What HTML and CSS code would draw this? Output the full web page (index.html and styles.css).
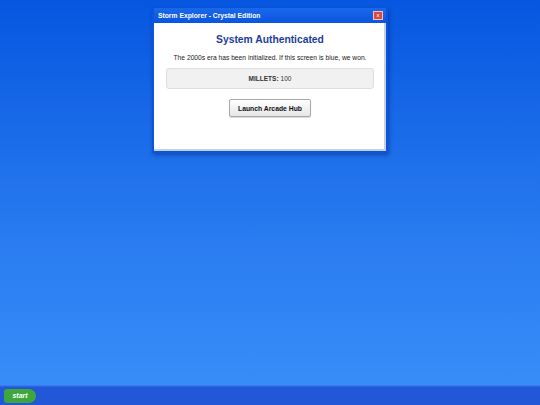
FILE: index.html
```html
<!DOCTYPE html>
<html>
<head>
<meta charset="utf-8">
<link rel="stylesheet" href="styles.css">
</head>
<body>
<div class="screen">
  <main class="desktop">
    <section class="window">
      <header class="titlebar">
        <span class="title">Storm Explorer - Crystal Edition</span>
        <span class="close">x</span>
      </header>
      <div class="content">
        <h1 class="heading">System Authenticated</h1>
        <p class="intro">The 2000s era has been initialized. If this screen is blue, we won.</p>
        <div class="stats"><b>MILLETS:</b> 100</div>
        <button class="launch">Launch Arcade Hub</button>
      </div>
    </section>
  </main>
  <footer class="taskbar">
    <span class="start">start</span>
  </footer>
</div>
</body>
</html>
```
FILE: styles.css
```css
html, body {
  margin: 0;
  padding: 0;
}
body {
  font-family: "Liberation Sans", Arial, sans-serif;
}
.screen {
  width: 540px;
  height: 405px;
  display: flex;
  flex-direction: column;
  background: linear-gradient(to bottom, #0756e0 0%, #2a7cf0 60%, #3a8ffa 100%);
}
.desktop {
  flex: 1;
  display: flex;
  justify-content: center;
  align-items: flex-start;
  padding-top: 8px;
}
.window {
  width: 232px;
  background: #0a55e0;
  border: 2px solid #0a55e0;
  border-top: 0;
  border-radius: 3px 3px 0 0;
  box-shadow: 1px 2px 4px rgba(0, 0, 60, 0.35);
}
.titlebar {
  height: 15px;
  display: flex;
  align-items: center;
  justify-content: space-between;
  padding: 0 3px 0 4px;
  background: linear-gradient(to bottom, #1a68ea, #0a55e0);
}
.title {
  color: #fff;
  font-weight: bold;
  font-size: 6.75px;
}
.close {
  width: 8px;
  height: 7px;
  background: #e0483a;
  border: 1px solid #f4c0b8;
  color: #fff;
  font-size: 6px;
  line-height: 6px;
  text-align: center;
}
.content {
  background: #fff;
  border-right: 2px solid #c8d0de;
  border-bottom: 2px solid #c8d0de;
  padding: 11px 10px 32px 12px;
  display: flex;
  flex-direction: column;
  align-items: center;
}
.heading {
  margin: 0;
  font-size: 10.3px;
  color: #1a3d9c;
  font-weight: bold;
}
.intro {
  margin: 9px 0 7px;
  font-size: 6.7px;
  color: #222;
}
.stats {
  align-self: stretch;
  height: 21px;
  box-sizing: border-box;
  background: #f1f1f1;
  border: 1px solid #dedede;
  border-radius: 3px;
  font-size: 6.5px;
  color: #333;
  display: flex;
  align-items: center;
  justify-content: center;
  gap: 2px;
}
.launch {
  margin-top: 10px;
  width: 82px;
  height: 18px;
  padding: 0;
  font-family: "Liberation Sans", Arial, sans-serif;
  font-weight: bold;
  font-size: 6.8px;
  color: #111;
  background: linear-gradient(to bottom, #ffffff, #e6e6e6);
  border: 1px solid #a8a8a8;
  border-radius: 2px;
  box-shadow: 0 1px 1px rgba(0,0,0,0.15);
}
.taskbar {
  height: 19px;
  background: #2258d8;
  border-top: 1px solid #3a78ec;
  box-shadow: inset 0 1px 0 #2a66e0;
  display: flex;
  align-items: center;
  padding-left: 4px;
}
.start {
  width: 32px;
  height: 14px;
  background: #3fa63c;
  border-radius: 3px 7px 7px 3px;
  color: #fff;
  font-weight: bold;
  font-style: italic;
  font-size: 7px;
  display: flex;
  align-items: center;
  justify-content: center;
}
```
